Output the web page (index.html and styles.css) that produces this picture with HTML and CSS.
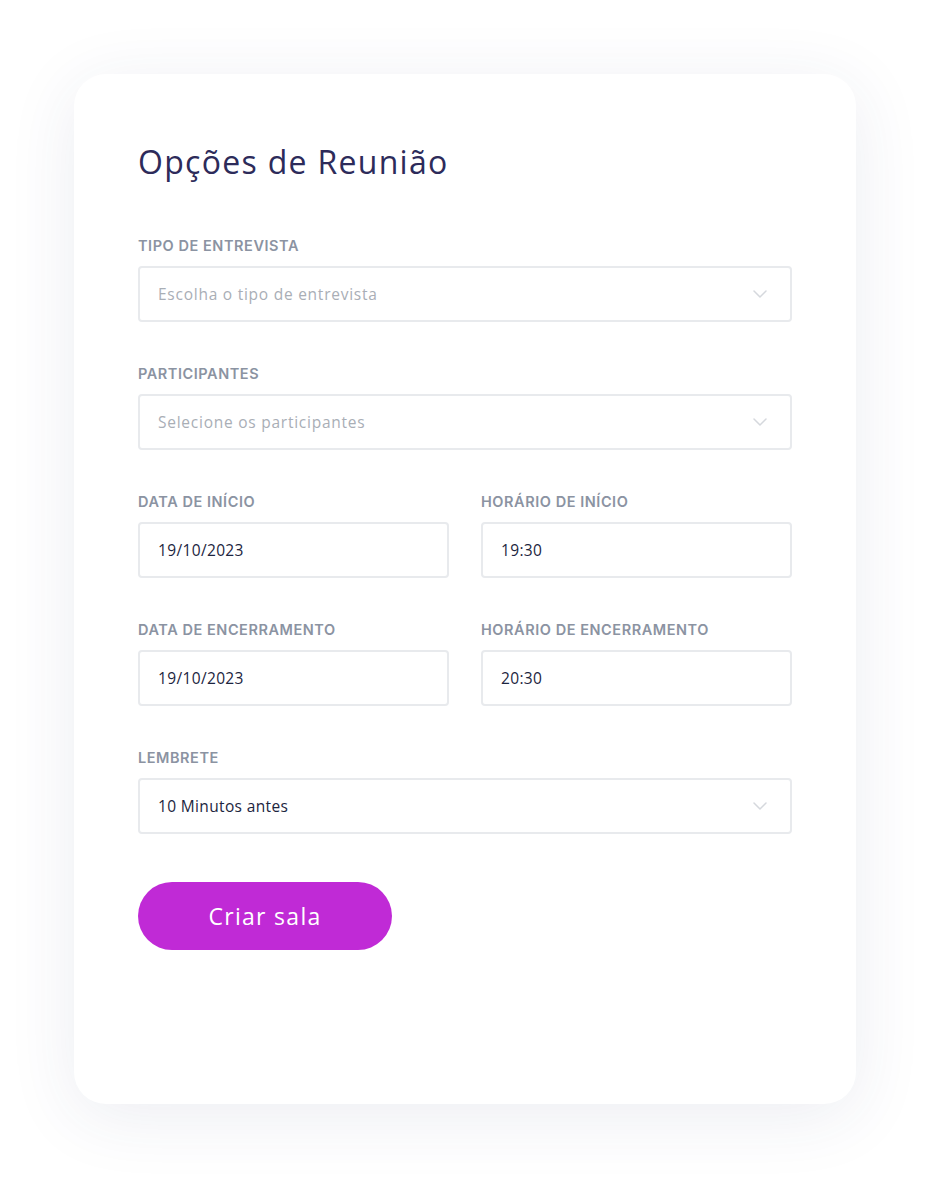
FILE: index.html
```html
<!DOCTYPE html>
<html lang="pt">
<head>
<meta charset="utf-8">
<title>Opções de Reunião</title>
<link rel="stylesheet" href="styles.css">
</head>
<body>
<main class="card">
  <h1 class="title">Opções de Reunião</h1>
  <form class="form">
    <div class="field">
      <label class="label">TIPO DE ENTREVISTA</label>
      <div class="input select placeholder">Escolha o tipo de entrevista
        <svg class="chev" viewBox="0 0 14 8" width="14" height="8"><path d="M1 1 L7 7 L13 1" fill="none" stroke="#d5d8dd" stroke-width="1.5" stroke-linecap="round" stroke-linejoin="round"/></svg>
      </div>
    </div>
    <div class="field">
      <label class="label">PARTICIPANTES</label>
      <div class="input select placeholder">Selecione os participantes
        <svg class="chev" viewBox="0 0 14 8" width="14" height="8"><path d="M1 1 L7 7 L13 1" fill="none" stroke="#d5d8dd" stroke-width="1.5" stroke-linecap="round" stroke-linejoin="round"/></svg>
      </div>
    </div>
    <div class="row">
      <div class="field">
        <label class="label">DATA DE INÍCIO</label>
        <div class="input">19/10/2023</div>
      </div>
      <div class="field">
        <label class="label">HORÁRIO DE INÍCIO</label>
        <div class="input">19:30</div>
      </div>
    </div>
    <div class="row">
      <div class="field">
        <label class="label">DATA DE ENCERRAMENTO</label>
        <div class="input">19/10/2023</div>
      </div>
      <div class="field">
        <label class="label">HORÁRIO DE ENCERRAMENTO</label>
        <div class="input">20:30</div>
      </div>
    </div>
    <div class="field">
      <label class="label">LEMBRETE</label>
      <div class="input select">10 Minutos antes
        <svg class="chev" viewBox="0 0 14 8" width="14" height="8"><path d="M1 1 L7 7 L13 1" fill="none" stroke="#d5d8dd" stroke-width="1.5" stroke-linecap="round" stroke-linejoin="round"/></svg>
      </div>
    </div>
    <button type="button" class="btn">Criar sala</button>
  </form>
</main>
</body>
</html>
```
FILE: styles.css
```css
html, body {
  margin: 0;
  padding: 0;
  background: #ffffff;
}
body {
  font-family: "Open Sans", "DejaVu Sans", sans-serif;
  padding: 74px 0 74px 74px;
}
.card {
  box-sizing: border-box;
  width: 782px;
  height: 1030px;
  background: #ffffff;
  border-radius: 32px;
  box-shadow: 0 12px 70px rgba(40, 50, 110, 0.09);
  padding: 68px 64px 0 64px;
}
.title {
  margin: 0;
  font-size: 32px;
  line-height: 40px;
  font-weight: 500;
  color: #2d2b5a;
  letter-spacing: 1.3px;
}
.form {
  margin-top: 54px;
  display: flex;
  flex-direction: column;
  gap: 42px;
}
.row {
  display: grid;
  grid-template-columns: 1fr 1fr;
  gap: 32px;
}
.field {
  display: flex;
  flex-direction: column;
  gap: 10px;
}
.label {
  font-family: "Inter", "Noto Sans", sans-serif;
  font-size: 14.5px;
  line-height: 20px;
  font-weight: 600;
  color: #8b93a2;
  letter-spacing: 0.55px;
}
.input {
  box-sizing: border-box;
  height: 56px;
  border: 2px solid #e8eaed;
  border-radius: 4px;
  padding: 0 18px;
  display: flex;
  align-items: center;
  font-size: 15.5px;
  letter-spacing: 0.35px;
  color: #1c2540;
}
.placeholder {
  color: #a9aeb6;
  letter-spacing: 0.75px;
}
.select {
  justify-content: space-between;
}
.chev {
  margin-right: 5px;
}
.btn {
  margin-top: 6px;
  align-self: flex-start;
  width: 254px;
  height: 68px;
  border: none;
  border-radius: 34px;
  background: #c02ad6;
  color: #ffffff;
  font-family: "Open Sans", "DejaVu Sans", sans-serif;
  font-size: 23px;
  font-weight: 400;
  letter-spacing: 1.3px;
  cursor: pointer;
}
```
